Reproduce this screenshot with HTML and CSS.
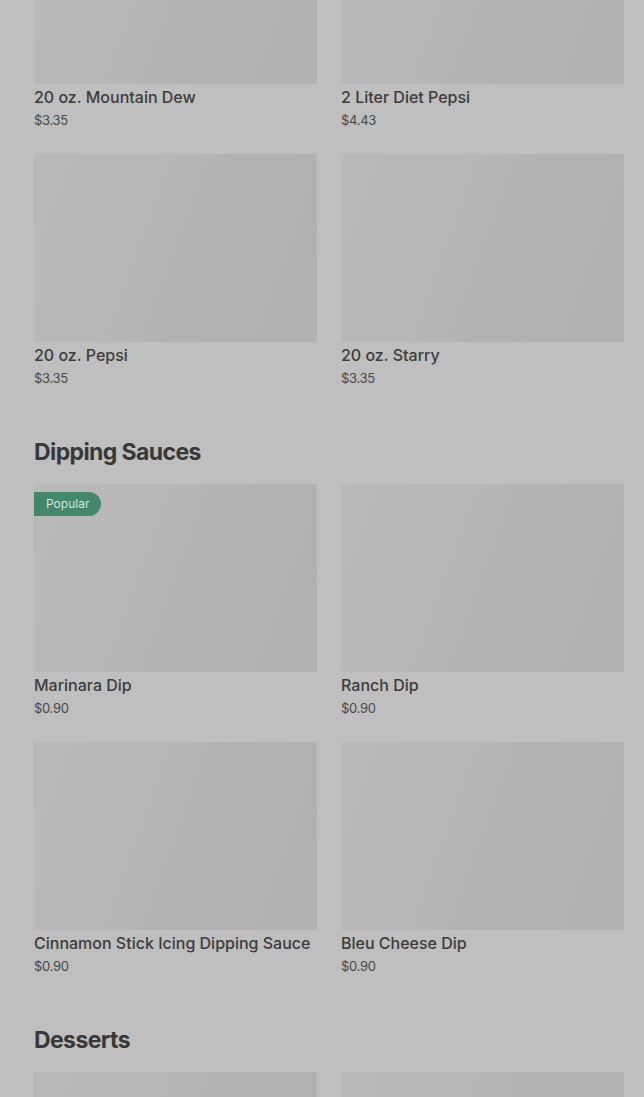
FILE: index.html
```html
<!DOCTYPE html>
<html>
<head>
<meta charset="utf-8">
<link rel="stylesheet" href="styles.css">
</head>
<body>
<div class="page">
  <section class="section first">
    <div class="grid">
      <div class="card"><div class="thumb"></div><div class="name">20 oz. Mountain Dew</div><div class="price">$3.35</div></div>
      <div class="card"><div class="thumb"></div><div class="name">2 Liter Diet Pepsi</div><div class="price">$4.43</div></div>
      <div class="card"><div class="thumb"></div><div class="name">20 oz. Pepsi</div><div class="price">$3.35</div></div>
      <div class="card"><div class="thumb"></div><div class="name">20 oz. Starry</div><div class="price">$3.35</div></div>
    </div>
  </section>
  <section class="section">
    <h2 class="heading">Dipping Sauces</h2>
    <div class="grid">
      <div class="card"><div class="thumb"><span class="badge">Popular</span></div><div class="name">Marinara Dip</div><div class="price">$0.90</div></div>
      <div class="card"><div class="thumb"></div><div class="name">Ranch Dip</div><div class="price">$0.90</div></div>
      <div class="card"><div class="thumb"></div><div class="name">Cinnamon Stick Icing Dipping Sauce</div><div class="price">$0.90</div></div>
      <div class="card"><div class="thumb"></div><div class="name">Bleu Cheese Dip</div><div class="price">$0.90</div></div>
    </div>
  </section>
  <section class="section">
    <h2 class="heading">Desserts</h2>
    <div class="grid">
      <div class="card"><div class="thumb"></div><div class="name">&nbsp;</div><div class="price">&nbsp;</div></div>
      <div class="card"><div class="thumb"></div><div class="name">&nbsp;</div><div class="price">&nbsp;</div></div>
    </div>
  </section>
</div>
</body>
</html>
```
FILE: styles.css
```css
html, body {
  margin: 0;
  padding: 0;
  background: #bfbfbf;
  overflow: hidden;
}
.page {
  padding: 0 20px 0 34px;
  margin-top: -104px;
  font-family: Inter, "Liberation Sans", sans-serif;
}
.section {
  margin-top: 48px;
}
.section.first {
  margin-top: 0;
}
.heading {
  margin: 0 0 16px 0;
  font-size: 23px;
  line-height: 32px;
  font-weight: 700;
  letter-spacing: -0.6px;
  color: #383838;
}
.grid {
  display: grid;
  grid-template-columns: 1fr 1fr;
  column-gap: 24px;
  row-gap: 24px;
}
.card {
  display: flex;
  flex-direction: column;
}
.thumb {
  position: relative;
  height: 188px;
  background: linear-gradient(110deg, #b9b9b9 0%, #b7b7b7 38%, #b2b2b2 58%, #b1b1b1 100%);
}
.badge {
  position: absolute;
  top: 8px;
  left: 0;
  height: 24px;
  padding: 0 12px;
  border-radius: 0 12px 12px 0;
  background: #44876a;
  color: #d6e6dc;
  font-size: 12px;
  line-height: 24px;
  font-weight: 400;
}
.name {
  margin-top: 1px;
  font-size: 16px;
  line-height: 24px;
  font-weight: 500;
  color: #3c3c3c;
  letter-spacing: 0;
}
.price {
  margin-top: 1px;
  font-size: 13px;
  line-height: 20px;
  color: #484848;
  letter-spacing: -0.3px;
}
```
